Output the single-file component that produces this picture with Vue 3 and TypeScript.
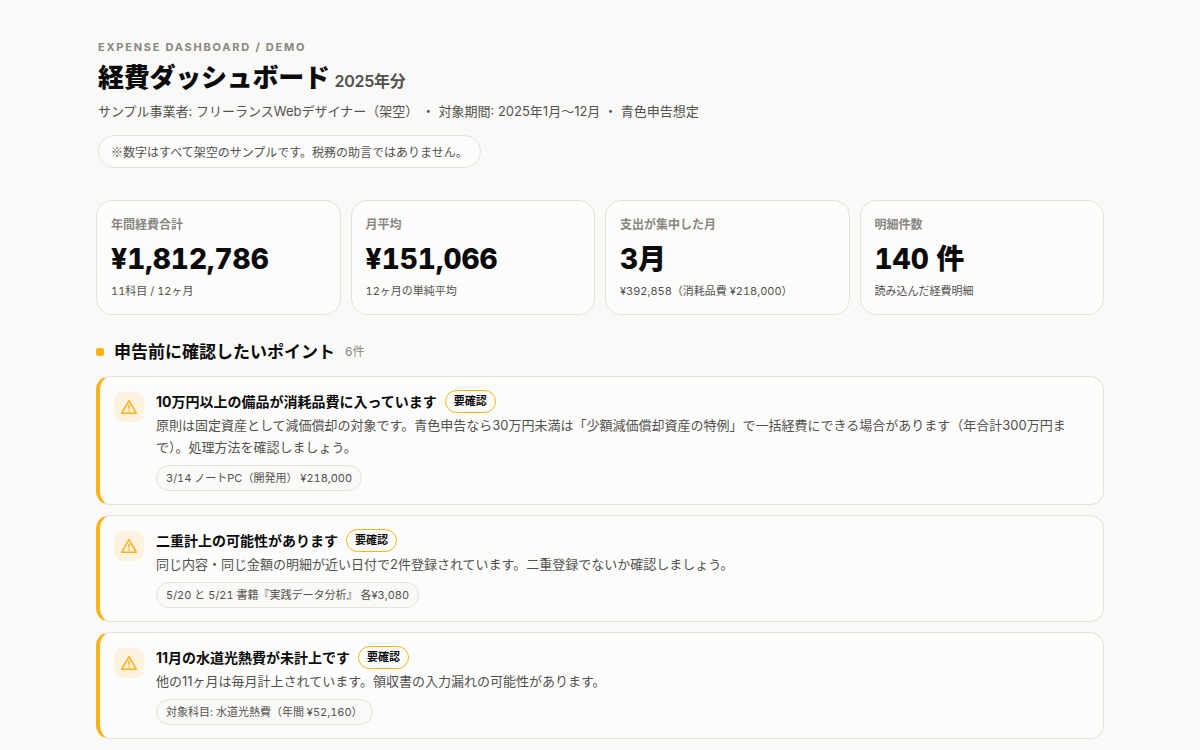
<script setup lang="ts">
interface Kpi {
  label: string
  value: string
  note: string
}

interface Alert {
  title: string
  body: string
  detail: string
}

const kpis: Kpi[] = [
  { label: '年間経費合計', value: '¥1,812,786', note: '11科目 / 12ヶ月' },
  { label: '月平均', value: '¥151,066', note: '12ヶ月の単純平均' },
  { label: '支出が集中した月', value: '3月', note: '¥392,858（消耗品費 ¥218,000）' },
  { label: '明細件数', value: '140 件', note: '読み込んだ経費明細' },
]

const alerts: Alert[] = [
  {
    title: '10万円以上の備品が消耗品費に入っています',
    body: '原則は固定資産として減価償却の対象です。青色申告なら30万円未満は「少額減価償却資産の特例」で一括経費にできる場合があります（年合計300万円まで）。処理方法を確認しましょう。',
    detail: '3/14 ノートPC（開発用） ¥218,000',
  },
  {
    title: '二重計上の可能性があります',
    body: '同じ内容・同じ金額の明細が近い日付で2件登録されています。二重登録でないか確認しましょう。',
    detail: '5/20 と 5/21 書籍『実践データ分析』 各¥3,080',
  },
  {
    title: '11月の水道光熱費が未計上です',
    body: '他の11ヶ月は毎月計上されています。領収書の入力漏れの可能性があります。',
    detail: '対象科目: 水道光熱費（年間 ¥52,160）',
  },
]
</script>

<template>
  <main class="page">
    <header class="head">
      <p class="eyebrow">EXPENSE DASHBOARD / DEMO</p>
      <h1 class="title">経費ダッシュボード <span class="year">2025年分</span></h1>
      <p class="meta">サンプル事業者: フリーランスWebデザイナー（架空） ・ 対象期間: 2025年1月〜12月 ・ 青色申告想定</p>
      <p class="disclaimer">※数字はすべて架空のサンプルです。税務の助言ではありません。</p>
    </header>

    <section class="kpis" aria-label="サマリー">
      <article v-for="kpi in kpis" :key="kpi.label" class="card kpi">
        <p class="kpi-label">{{ kpi.label }}</p>
        <p class="kpi-value">{{ kpi.value }}</p>
        <p class="kpi-note">{{ kpi.note }}</p>
      </article>
    </section>

    <section>
      <h2 class="section-title">
        <span class="marker"></span>申告前に確認したいポイント<span class="count">6件</span>
      </h2>
      <ul class="alerts">
        <li v-for="alert in alerts" :key="alert.title" class="card alert">
          <span class="alert-icon">
            <svg width="18" height="18" viewBox="0 0 18 18" fill="none" aria-hidden="true">
              <path d="M9 2.6 16.2 15.2H1.8Z" stroke="currentColor" stroke-width="1.6" stroke-linejoin="round" />
              <path d="M9 6.8v4.2M9 12v1.5" stroke="currentColor" stroke-width="1.4" />
            </svg>
          </span>
          <div class="alert-text">
            <h3 class="alert-title">{{ alert.title }}<span class="badge">要確認</span></h3>
            <p class="alert-body">{{ alert.body }}</p>
            <p class="chip">{{ alert.detail }}</p>
          </div>
        </li>
      </ul>
    </section>
  </main>
</template>

<style>
body {
  margin: 0;
  background: #f9f9f7;
}
</style>

<style scoped>
.page {
  box-sizing: border-box;
  max-width: 1056px;
  margin: 0 auto;
  padding: 40px 24px;
  color: #0b0b0b;
  font-family: Inter, "Noto Sans CJK JP", sans-serif;
  font-size: 13px;
  line-height: 21px;
}

p,
h1,
h2,
h3,
ul {
  margin: 0;
  padding: 0;
}

.head {
  padding: 0 2px;
}

.eyebrow {
  color: #898781;
  font-size: 11px;
  font-weight: 700;
  line-height: 14px;
  letter-spacing: 0.16em;
}

.title {
  margin-top: 6px;
  font-size: 26px;
  font-weight: 900;
  line-height: 36px;
  letter-spacing: -0.01em;
}

.year {
  color: #52514e;
  font-size: 16px;
  font-weight: 600;
}

.meta {
  margin-top: 2px;
  color: #52514e;
}

.disclaimer {
  display: inline-block;
  margin-top: 13px;
  padding: 5px 12px;
  border: 1px solid #e3e2dd;
  border-radius: 999px;
  background: #fcfcfb;
  color: #52514e;
  font-family: "Noto Sans CJK JP", sans-serif;
  font-size: 12px;
}

.card {
  border: 1px solid #e3e2dd;
  border-radius: 16px;
  background: #fcfcfb;
}

.kpis {
  display: grid;
  grid-template-columns: repeat(4, 1fr);
  gap: 10px;
  margin-top: 32px;
}

.kpi {
  padding: 14px;
  font-variant-numeric: tabular-nums;
}

.kpi-label {
  color: #898781;
  font-size: 12px;
  font-weight: 600;
  line-height: 20px;
}

.kpi-value {
  margin-top: 4px;
  font-size: 28px;
  font-weight: 800;
  line-height: 40px;
}

.kpi-note {
  margin-top: 4px;
  color: #52514e;
  font-size: 11px;
  line-height: 17px;
}

.section-title {
  display: flex;
  align-items: center;
  margin-top: 24px;
  font-size: 17px;
  font-weight: 700;
  line-height: 26px;
}

.marker {
  width: 8px;
  height: 8px;
  margin-right: 10px;
  border-radius: 2px;
  background: #fab219;
}

.count {
  margin-left: 10px;
  color: #898781;
  font-size: 12px;
  font-weight: 400;
}

.alerts {
  display: grid;
  gap: 10px;
  margin-top: 11px;
  list-style: none;
}

.alert {
  display: flex;
  gap: 12px;
  padding: 13px 14px;
  border-left: 4px solid #fab219;
  border-radius: 14px;
}

.alert-icon {
  display: flex;
  flex: none;
  align-items: center;
  justify-content: center;
  width: 30px;
  height: 30px;
  margin-top: 2px;
  border-radius: 9px;
  background: #fbf2df;
  color: #fab219;
}

.alert-title {
  display: flex;
  align-items: center;
  gap: 8px;
  font-size: 14px;
  font-weight: 700;
  line-height: 23px;
}

.badge {
  padding: 0 8px;
  border: 1px solid #fab219;
  border-radius: 999px;
  font-size: 11px;
  line-height: 21px;
}

.alert-body {
  margin-top: 1px;
  color: #52514e;
  line-height: 22px;
}

.chip {
  display: inline-block;
  margin-top: 7px;
  padding: 3px 9px;
  border: 1px solid #e3e2dd;
  border-radius: 999px;
  background: #f9f9f7;
  color: #52514e;
  font-size: 11px;
  line-height: 18px;
  font-variant-numeric: tabular-nums;
}
</style>
